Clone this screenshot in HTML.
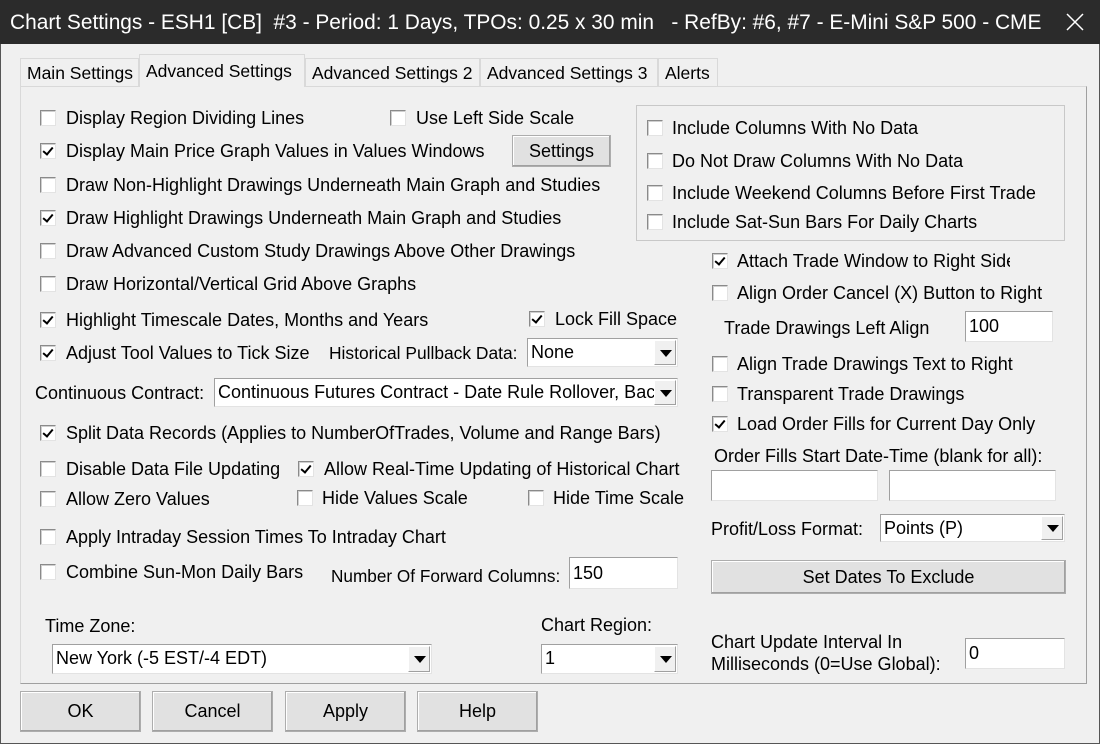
<!DOCTYPE html>
<html><head><meta charset="utf-8"><style>
*{box-sizing:border-box;margin:0;padding:0}
body{width:1100px;height:744px;background:#f0f0f0;font-family:"Liberation Sans",sans-serif;font-size:18px;color:#000;position:relative;overflow:hidden}
.a{position:absolute;white-space:nowrap;line-height:20px}
.cb{position:absolute;width:16px;height:16px;background:#fff;border:1px solid #8a8a8a;border-right-color:#e3e3e3;border-bottom-color:#e3e3e3;box-shadow:inset 1px 1px 0 #cfcfcf}
.cb.k::after{content:"";position:absolute;left:4px;top:1px;width:4px;height:8px;border-right:2px solid #000;border-bottom:2px solid #000;transform:rotate(40deg)}
.in{position:absolute;background:#fff;border:1px solid #a0a0a0;border-right-color:#e3e3e3;border-bottom-color:#e3e3e3;padding-left:3px;line-height:26px;overflow:hidden;white-space:nowrap}
.sel .ar{position:absolute;right:1px;top:1px;bottom:1px;width:22px;background:#f0f0f0;border:1px solid #fff;border-right-color:#a0a0a0;border-bottom-color:#a0a0a0}
.sel .ar::after{content:"";position:absolute;left:5px;top:50%;margin-top:-3px;border-left:6px solid transparent;border-right:6px solid transparent;border-top:7px solid #000}
.btn{position:absolute;background:#e1e1e1;border:1px solid #adadad;box-shadow:inset -1px -1px 0 #a0a0a0,inset 1px 1px 0 #fff;text-align:center}
.tab{position:absolute;top:58px;height:28px;border:1px solid #d9d9d9;border-bottom:none;background:#f0f0f0;padding:0 0 0 6px;line-height:28px;white-space:nowrap;overflow:hidden;font-size:17.5px}
</style></head><body>
<div style="position:absolute;left:0;top:0;width:1100px;height:44px;background:#2b2b2b;color:#fff"><div class="a" style="left:10px;top:12px;font-size:20.9px;line-height:22px">Chart Settings - ESH1 [CB]&nbsp; #3 - Period: 1 Days, TPOs: 0.25 x 30 min &nbsp; - RefBy: #6, #7 - E-Mini S&amp;P 500 - CME</div>
<svg style="position:absolute;left:1066px;top:13px" width="18" height="18"><path d="M1 1L17 17M17 1L1 17" stroke="#fff" stroke-width="1.5"/></svg></div>
<div style="position:absolute;left:0;top:44px;width:1px;height:700px;background:#555"></div>
<div style="position:absolute;right:0;top:44px;width:1px;height:700px;background:#555"></div>
<div style="position:absolute;left:0;bottom:0;width:1100px;height:1px;background:#555"></div>
<div style="position:absolute;left:20px;top:86px;width:1067px;height:598px;border:1px solid #d9d9d9;border-right-color:#a0a0a0;border-bottom-color:#a0a0a0;background:#f0f0f0"></div>
<div class="tab" style="left:20px;width:119px">Main Settings</div>
<div class="tab" style="left:139px;top:54px;height:33px;width:166px;border-color:#d9d9d9;line-height:32px;z-index:2">Advanced Settings</div>
<div class="tab" style="left:305px;width:175px">Advanced Settings 2</div>
<div class="tab" style="left:480px;width:178px">Advanced Settings 3</div>
<div class="tab" style="left:658px;width:60px">Alerts</div>

<div class="cb" style="left:40px;top:110px"></div><div class="a" style="left:66px;top:108px">Display Region Dividing Lines</div>
<div class="cb" style="left:390px;top:110px"></div><div class="a" style="left:416px;top:108px">Use Left Side Scale</div>
<div class="cb k" style="left:40px;top:143px"></div><div class="a" style="left:66px;top:141px">Display Main Price Graph Values in Values Windows</div>
<div class="btn" style="left:512px;top:135px;width:99px;height:32px;line-height:30px">Settings</div>
<div class="cb" style="left:40px;top:177px"></div><div class="a" style="left:66px;top:175px">Draw Non-Highlight Drawings Underneath Main Graph and Studies</div>
<div class="cb k" style="left:40px;top:210px"></div><div class="a" style="left:66px;top:208px">Draw Highlight Drawings Underneath Main Graph and Studies</div>
<div class="cb" style="left:40px;top:243px"></div><div class="a" style="left:66px;top:241px">Draw Advanced Custom Study Drawings Above Other Drawings</div>
<div class="cb" style="left:40px;top:276px"></div><div class="a" style="left:66px;top:274px">Draw Horizontal/Vertical Grid Above Graphs</div>
<div class="cb k" style="left:40px;top:312px"></div><div class="a" style="left:66px;top:310px">Highlight Timescale Dates, Months and Years</div>
<div class="cb k" style="left:529px;top:311px"></div><div class="a" style="left:555px;top:309px">Lock Fill Space</div>
<div class="cb k" style="left:40px;top:345px"></div><div class="a" style="left:66px;top:343px">Adjust Tool Values to Tick Size</div>
<div class="a" style="left:329px;top:343px;font-size:17.4px">Historical Pullback Data:</div>
<div class="in sel" style="left:527px;top:338px;width:151px;height:29px">None<div class="ar"></div></div>
<div class="a" style="left:35px;top:383px">Continuous Contract:</div>
<div class="in sel" style="left:214px;top:378px;width:464px;height:29px">Continuous Futures Contract - Date Rule Rollover, Bac<div class="ar"></div></div>
<div class="cb k" style="left:40px;top:425px"></div><div class="a" style="left:66px;top:423px">Split Data Records (Applies to NumberOfTrades, Volume and Range Bars)</div>
<div class="cb" style="left:40px;top:461px"></div><div class="a" style="left:66px;top:459px">Disable Data File Updating</div>
<div class="cb k" style="left:298px;top:461px"></div><div class="a" style="left:324px;top:459px">Allow Real-Time Updating of Historical Chart</div>
<div class="cb" style="left:40px;top:491px"></div><div class="a" style="left:66px;top:489px">Allow Zero Values</div>
<div class="cb" style="left:297px;top:490px"></div><div class="a" style="left:322px;top:488px">Hide Values Scale</div>
<div class="cb" style="left:528px;top:490px"></div><div class="a" style="left:553px;top:488px">Hide Time Scale</div>
<div class="cb" style="left:40px;top:529px"></div><div class="a" style="left:66px;top:527px">Apply Intraday Session Times To Intraday Chart</div>
<div class="cb" style="left:40px;top:564px"></div><div class="a" style="left:66px;top:562px">Combine Sun-Mon Daily Bars</div>
<div class="a" style="left:331px;top:566px;font-size:17.2px">Number Of Forward Columns:</div>
<div class="in" style="left:569px;top:557px;width:109px;height:32px;line-height:30px">150</div>
<div class="a" style="left:45px;top:616px">Time Zone:</div>
<div class="in sel" style="left:52px;top:644px;width:380px;height:30px">New York (-5 EST/-4 EDT)<div class="ar"></div></div>
<div class="a" style="left:541px;top:615px">Chart Region:</div>
<div class="in sel" style="left:541px;top:644px;width:137px;height:30px">1<div class="ar"></div></div>

<div style="position:absolute;left:636px;top:105px;width:429px;height:136px;border:1px solid #c8c8c8"></div>
<div class="cb" style="left:647px;top:120px"></div><div class="a" style="left:672px;top:118px">Include Columns With No Data</div>
<div class="cb" style="left:647px;top:153px"></div><div class="a" style="left:672px;top:151px">Do Not Draw Columns With No Data</div>
<div class="cb" style="left:647px;top:185px"></div><div class="a" style="left:672px;top:183px">Include Weekend Columns Before First Trade</div>
<div class="cb" style="left:647px;top:214px"></div><div class="a" style="left:672px;top:212px">Include Sat-Sun Bars For Daily Charts</div>
<div class="cb k" style="left:712px;top:253px"></div><div class="a" style="left:737px;top:251px;width:273px;overflow:hidden">Attach Trade Window to Right Side</div>
<div class="cb" style="left:712px;top:285px"></div><div class="a" style="left:737px;top:283px">Align Order Cancel (X) Button to Right</div>
<div class="a" style="left:724px;top:318px">Trade Drawings Left Align</div>
<div class="in" style="left:965px;top:311px;width:88px;height:31px;line-height:28px">100</div>
<div class="cb" style="left:712px;top:356px"></div><div class="a" style="left:737px;top:354px">Align Trade Drawings Text to Right</div>
<div class="cb" style="left:712px;top:386px"></div><div class="a" style="left:737px;top:384px">Transparent Trade Drawings</div>
<div class="cb k" style="left:712px;top:416px"></div><div class="a" style="left:737px;top:414px">Load Order Fills for Current Day Only</div>
<div class="a" style="left:714px;top:446px">Order Fills Start Date-Time (blank for all):</div>
<div class="in" style="left:711px;top:470px;width:167px;height:31px"></div>
<div class="in" style="left:889px;top:470px;width:167px;height:31px"></div>
<div class="a" style="left:711px;top:519px">Profit/Loss Format:</div>
<div class="in sel" style="left:880px;top:514px;width:185px;height:28px;line-height:26px">Points (P)<div class="ar"></div></div>
<div class="btn" style="left:711px;top:560px;width:355px;height:34px;line-height:32px">Set Dates To Exclude</div>
<div class="a" style="left:711px;top:632px">Chart Update Interval In</div>
<div class="a" style="left:711px;top:654px">Milliseconds (0=Use Global):</div>
<div class="in" style="left:965px;top:638px;width:100px;height:31px;line-height:28px">0</div>

<div class="btn" style="left:20px;top:691px;width:121px;height:41px;line-height:39px">OK</div>
<div class="btn" style="left:152px;top:691px;width:121px;height:41px;line-height:39px">Cancel</div>
<div class="btn" style="left:285px;top:691px;width:121px;height:41px;line-height:39px">Apply</div>
<div class="btn" style="left:417px;top:691px;width:121px;height:41px;line-height:39px">Help</div>
</body></html>
